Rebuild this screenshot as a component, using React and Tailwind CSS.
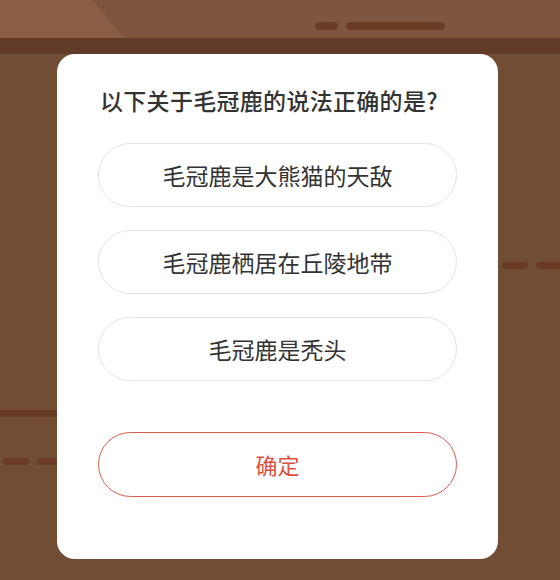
import React from 'react';

const options = ['毛冠鹿是大熊猫的天敌', '毛冠鹿栖居在丘陵地带', '毛冠鹿是秃头'];

export default function App() {
  return (
    <div
      className="relative w-[560px] h-[580px] overflow-hidden bg-[#724d35]"
      style={{ fontFamily: '"Noto Sans CJK SC", "Noto Sans", sans-serif' }}
    >
      {/* top bar */}
      <div className="relative h-[38px] bg-[#7e5640]">
        <svg className="absolute inset-0" width="560" height="38">
          <polygon points="0,0 92,0 124,38 0,38" fill="#8a5f46" />
        </svg>
        <div className="relative flex gap-[8px] pl-[315px] pt-[22px]">
          <div className="w-[23px] h-[8px] rounded-full bg-[#6a3d27]" />
          <div className="w-[99px] h-[8px] rounded-full bg-[#6a3d27]" />
        </div>
      </div>
      <div className="h-[16px] bg-[#613b27]" />

      {/* background stripes */}
      <div className="absolute left-0 top-[410px] w-[70px] h-[7px] bg-[#663a24]" />
      <div className="absolute left-[3px] top-[458px] flex gap-[8px]">
        <div className="w-[26px] h-[7px] rounded-full bg-[#6a3b25]" />
        <div className="w-[26px] h-[7px] rounded-full bg-[#6a3b25]" />
      </div>
      <div className="absolute left-[502px] top-[262px] flex gap-[8px]">
        <div className="w-[26px] h-[7px] rounded-full bg-[#6a3b25]" />
        <div className="w-[26px] h-[7px] rounded-full bg-[#6a3b25]" />
      </div>

      {/* dialog */}
      <div className="absolute left-[57px] top-[54px] w-[441px] h-[505px] bg-white rounded-[18px] px-[41px] pt-[30px]">
        <h2 className="ml-[2px] text-[23px] leading-[32px] font-medium text-[#333333] tracking-[0.3px]">
          以下关于毛冠鹿的说法正确的是?
        </h2>
        <div className="mt-[27px] flex flex-col gap-[23px]">
          {options.map((o) => (
            <button
              key={o}
              className="h-[64px] w-full rounded-full border border-[#e3e3e3] text-[23px] text-[#333333] flex items-center justify-center"
            >
              {o}
            </button>
          ))}
        </div>
        <button className="mt-[51px] h-[65px] w-full rounded-full border-[1.5px] border-[#df5a4c] text-[22px] text-[#df4f41] flex items-center justify-center">
          确定
        </button>
      </div>
    </div>
  );
}
